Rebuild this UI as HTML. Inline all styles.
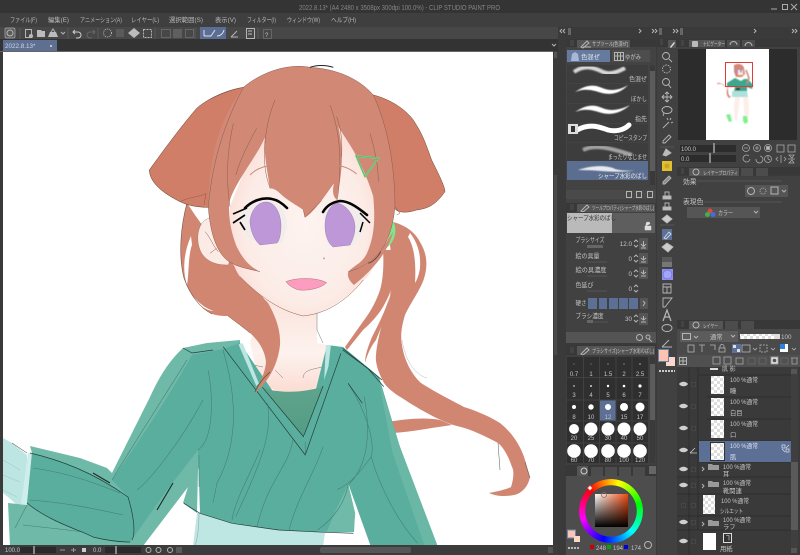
<!DOCTYPE html>
<html><head><meta charset="utf-8"><title>CLIP STUDIO PAINT PRO</title>
<style>
html,body{margin:0;padding:0;background:#3a3a3a;width:800px;height:555px;overflow:hidden}
svg{display:block;font-family:"Liberation Sans","Noto Sans CJK JP",sans-serif}
text{fill:#c4c4c4;font-size:6.3px}
.m{fill:#b8b8b8;font-size:6.5px}
.s{font-size:6px}
.e{text-anchor:end}
.c{text-anchor:middle}
.l{fill:none;stroke:#457d6f;stroke-width:.55;vector-effect:non-scaling-stroke}
.k{fill:none;stroke:#24403a;stroke-width:.7;vector-effect:non-scaling-stroke}
.h{fill:none;stroke:#8a5d4e;stroke-width:.5;vector-effect:non-scaling-stroke}
.i{fill:none;stroke:#b5b5b5;stroke-width:1}
.w{fill:#bcbcbc}
.d{fill:none;stroke:#666;stroke-width:1}
</style></head><body>
<svg width="800" height="555" viewBox="0 0 800 555" xmlns="http://www.w3.org/2000/svg">
<defs>
<radialGradient id="fc" cx=".5" cy=".55" r=".55"><stop offset="0" stop-color="#fdf3f0"/><stop offset=".7" stop-color="#fcece7"/><stop offset="1" stop-color="#fbdcd3"/></radialGradient>
<linearGradient id="nk" x1="0" y1="0" x2="0" y2="1"><stop offset="0" stop-color="#fce2da"/><stop offset=".6" stop-color="#fdf2ee"/><stop offset="1" stop-color="#fbdcd2"/></linearGradient>
<linearGradient id="sh" x1="0" y1="0" x2="0" y2="1"><stop offset="0" stop-color="#5fa48c"/><stop offset="1" stop-color="#549c85"/></linearGradient>
<linearGradient id="sq1" x1="0" y1="0" x2="1" y2="0"><stop offset="0" stop-color="#fff"/><stop offset="1" stop-color="#f04a10"/></linearGradient>
<linearGradient id="sq2" x1="0" y1="0" x2="0" y2="1"><stop offset="0" stop-color="#000" stop-opacity="0"/><stop offset="1" stop-color="#000"/></linearGradient>
<pattern id="ck" width="6" height="6" patternUnits="userSpaceOnUse"><rect width="6" height="6" fill="#fff"/><rect width="3" height="3" fill="#ddd"/><rect x="3" y="3" width="3" height="3" fill="#ddd"/></pattern>
<filter id="bl"><feGaussianBlur stdDeviation=".8"/></filter>
<filter id="bs"><feGaussianBlur stdDeviation=".4"/></filter>
</defs>

<!-- chrome -->
<rect width="800" height="555" fill="#3a3a3a"/>
<rect width="800" height="13" fill="#343434"/>
<rect y="13" width="800" height="14" fill="#3f3f3f"/>
<rect y="27" width="558" height="12" fill="#474747"/>
<rect x="558" y="27" width="242" height="12" fill="#3a3a3a"/>
<rect y="39" width="558" height="12" fill="#333"/>
<text x="299" y="10" textLength="201" lengthAdjust="spacingAndGlyphs" style="font-size:7.5px;fill:#858585">2022.8.13* (A4 2480 x 3508px 300dpi 100.0%)  - CLIP STUDIO PAINT PRO</text>
<path d="M771 9h6" stroke="#aaa" fill="none"/><rect x="782.500" y="4.500" width="5" height="5" fill="none" stroke="#aaa"/><path d="M791 4l6 6M797 4l-6 6" stroke="#aaa" fill="none"/>
<text class="m" x="10" y="22" textLength="27" lengthAdjust="spacingAndGlyphs">ファイル(F)</text>
<text class="m" x="48" y="22" textLength="21" lengthAdjust="spacingAndGlyphs">編集(E)</text>
<text class="m" x="80" y="22" textLength="42" lengthAdjust="spacingAndGlyphs">アニメーション(A)</text>
<text class="m" x="131" y="22" textLength="28" lengthAdjust="spacingAndGlyphs">レイヤー(L)</text>
<text class="m" x="169" y="22" textLength="34" lengthAdjust="spacingAndGlyphs">選択範囲(S)</text>
<text class="m" x="215" y="22" textLength="21" lengthAdjust="spacingAndGlyphs">表示(V)</text>
<text class="m" x="247" y="22" textLength="29" lengthAdjust="spacingAndGlyphs">フィルター(I)</text>
<text class="m" x="287" y="22" textLength="33" lengthAdjust="spacingAndGlyphs">ウィンドウ(W)</text>
<text class="m" x="331" y="22" textLength="25" lengthAdjust="spacingAndGlyphs">ヘルプ(H)</text>
<!-- toolbar icons -->
<rect x="5" y="28" width="10" height="10" rx="1.500" fill="#5c5c5c" stroke="#aaa" stroke-width=".7"/><circle cx="10" cy="33" r="3" class="i"/>
<path d="M20 28v11M68 28v11M98 28v11M155 28v11M195 28v11M258 28v11" stroke="#5a5a5a"/>
<rect x="25.500" y="29.500" width="6" height="8" class="i"/><circle cx="31" cy="36" r="2" fill="#bbb"/>
<path d="M37 37v-7h4l1 1h3v6z" class="w"/><path d="M48 37l2-5h6l2 5z" class="w"/><path d="M51 32l2-3 2 3" class="i"/>
<path d="M61 32l2 2 2-2" class="i" stroke-width=".7"/>
<path d="M75 30l-2 2 2 2M73 32h5a3 3 0 0 1 0 6h-2" fill="none" stroke="#ccc"/><path d="M93 30l2 2-2 2M95 32h-5a3 3 0 0 0 0 6h2" class="d"/>
<circle cx="107.500" cy="33" r="4" class="i" stroke-dasharray="1 1"/><rect x="116" y="29" width="8" height="8" fill="#5a5a5a"/>
<path d="M134 28l6 5-6 5-6-5z" class="w"/><rect x="143.500" y="29.500" width="8" height="8" class="i" stroke-dasharray="2 1"/>
<rect x="161.500" y="29.500" width="9" height="8" class="d"/><rect x="173" y="29" width="9" height="9" fill="#5f5f5f"/><rect x="185.500" y="29.500" width="8" height="8" class="d"/>
<rect x="200" y="27" width="26" height="12" fill="#5a6d92"/>
<path d="M204 36v-6M204 36h7l4-6M217 36c3 0 6-2 7-6" fill="none" stroke="#dde"/>
<path d="M231 37h7M231 37l6-6" class="i"/><rect x="246.500" y="28.500" width="8" height="10" class="i"/><path d="M248 31h4M248 34h4" stroke="#bbb"/>
<rect x="263.500" y="29.500" width="8" height="9" class="d"/><text x="265" y="37" class="s">?</text>
<path d="M552 44l2 2 2-2" class="i" stroke-width=".7"/>
<!-- tab -->
<rect x="3" y="40" width="54" height="11" fill="#5e6f92"/>
<text x="5" y="48" style="fill:#cfd6e6;font-size:6.300px">2022.8.13*</text><circle cx="51" cy="46" r="1" fill="#ddd"/>

<!-- canvas -->
<rect x="0" y="51" width="553" height="1" fill="#666"/>
<rect x="3" y="52" width="550" height="493" fill="#fff"/>

<svg x="3" y="52" width="550" height="493" viewBox="3 52 550 493" overflow="hidden">
<!-- tail -->
<path d="M393 222C405 225 415 232 420 242C426 252 428 262 425 275C422 288 412 300 405 315C402 325 400 335 402 345C404 360 412 375 421 383C440 395 455 402 464 407C480 412 492 418 500 423C515 435 522 450 525 460L530 477C528 488 520 494 514 495C505 497 495 496 489 493C500 491 510 488 511 487C514 478 514 470 512 467C508 455 503 447 498 443C485 436 472 430 461 427C445 424 420 410 402 398C392 392 388 388 384 383C378 372 375 362 376 355C377 340 384 315 390 297C392 280 392 260 390 245Z" fill="#d18672"/>
<path d="M383 250C384 265 383 280 380 290C375 305 368 315 362 323L345 347L347 350L363 330C372 322 378 315 383 307C388 298 392 290 392 283L392 250Z" fill="#d18672"/>
<path d="M390 295C386 310 378 325 372 337C368 347 365 355 365 363C368 352 372 345 376 340L384 320Z" fill="#d18672"/>
<path d="M388 422C405 419 425 417 440 420L452 425C430 428 405 433 390 433Z" fill="#d18672"/>
<path d="M410 233C418 243 421 255 420 268C419 275 417 280 415 283C416 265 415 248 408 237Z" fill="#fff"/>
<path d="M402 340C405 360 415 375 427 378" fill="none" stroke="#bbb" stroke-width=".5"/>
<path d="M498 443L500 470M525 462L530 478" fill="none" stroke="#555" stroke-width=".5"/>

<!-- neck -->
<path d="M268 295L250 342L259 383L279 392L304 392L323 385L327 345L317 343L317 312L337 295Z" fill="url(#nk)"/>
<path d="M253 365L263 367M275 370L283 378M303 378C304 372 306 370 323 367M317 312L317 330L323 343" fill="none" stroke="#777" stroke-width=".5"/>
<!-- under shirt -->
<path d="M197 513L325 533L323 546L193 546Z" fill="#bee6e3"/>
<path d="M199 513C199 530 197 540 195 546" fill="none" stroke="#999" stroke-width=".5"/>
<!-- cuff -->
<path d="M3 438L12 443L27 455L27 473L25 503L17 505L8 497L3 493Z" fill="#bde6e2"/>
<path d="M28 453L32 453L27 505L21 504Z" fill="#cdeeea"/>
<path d="M3 460L20 470M3 475L20 482M3 490L17 497" fill="none" stroke="#9cc2bd" stroke-width=".5"/>
<path d="M12 443L27 453" fill="none" stroke="#333" stroke-width=".5"/>
<!-- sweater base -->
<path d="M183 348L207 343L240 340L240 348L223 352L213 400L198 470L197 513L183 503L188 487L143 546L10 546L8 503L27 505L32 453L30 446L80 458L107 468L112 473L150 397C160 375 170 360 183 348Z" fill="#6fb9a8"/>
<path d="M32 453C60 460 93 472 128 497C135 520 135 535 130 543C120 542 105 540 93 537C80 530 50 522 27 503Z" fill="#5aae9e"/>
<path d="M192 355C170 395 140 440 112 480L128 497C135 520 135 535 133 538L167 490L198 450L213 400L223 350Z" fill="#5aae9e"/>
<path d="M198 450L213 400L208 370L192 355L223 349L240 343L304 437L327 345L343 347L371 370L379 377L388 407L400 447L438 547L371 547L348 483L355 513L354 532L325 532L279 530L232 523L200 513Z" fill="#5aae9e"/>
<g transform="translate(0,300) scale(.357,.3333)">
<path d="M1085 320L1120 440L1226 740L1190 740L1100 460L1060 235Z" fill="#6ab7a6"/>
<path d="M915 697L990 697L995 640L975 555L945 620Z" fill="#70baa9"/>
<path d="M735 262C780 282 860 278 905 258L850 410Z" fill="url(#sh)"/>
<path d="M668 133L680 130L725 250L718 258Z" fill="#bde6e2"/>
<path d="M913 135L927 135L920 200L908 240Z" fill="#bde6e2"/>
<path d="M625 140L855 465L955 160M735 262L850 410L905 258M960 145L1030 205L1075 260" class="k"/>
<path d="M855 465V425M750 310C760 400 740 470 660 650M820 420C810 500 750 540 720 680M905 440C880 520 830 600 810 690M975 250C1030 340 1050 430 1040 470C1000 530 970 560 945 568M1020 290C1040 400 1030 500 975 555M975 555C960 640 900 680 890 690M1040 470C1060 550 1110 660 1170 730" class="l"/>
<path d="M960 150L1030 205L1070 240M975 250L1015 310" class="k"/>
<path d="M515 610L560 640L650 670L780 690L910 697L990 700" class="k"/>
</g>
<!-- left lines -->
<g fill="none" stroke="#457d6f" stroke-width=".55">
<path d="M208 370C214 400 213 440 198 450M223 350C240 407 235 450 217 483L213 503M260 450C250 475 235 500 232 520M187 360C160 403 128 453 112 480M203 400C180 443 150 480 137 490M33 468C70 473 100 485 120 493M30 500C70 503 100 510 123 515M27 505L15 528M23 525C50 528 70 530 83 532M199 455V487"/>
</g>
<g fill="none" stroke="#24403a" stroke-width=".7">
<path d="M183 348L192 353L213 350M30 453C60 460 93 472 128 497C135 520 135 535 132 540M27 503C50 522 80 530 93 537C105 540 120 542 130 542"/>
<path d="M93 473L110 483M173 483L157 510" stroke-width="1.100" stroke="#1b2b27"/>
</g>

<!-- back left hair -->
<path d="M187 203C181 225 178 255 184 278C190 295 200 308 212 314C218 316 224 316 228 316C236 322 244 328 250 333C260 342 265 352 266 362C265 375 258 385 255 393C268 382 278 365 280 345C281 330 275 315 268 303L220 250L195 215Z" fill="#d18672"/>
<path d="M191 236C184 252 182 270 187 285C189 275 188 255 192 245Z" fill="#fff"/>
<path d="M187 287C193 298 203 308 214 311C205 311 195 303 187 287Z" fill="#fff"/>
<path d="M187 203C181 225 178 255 184 278C190 295 200 308 212 314" fill="none" stroke="#7c5144" stroke-width=".6"/>
<path d="M270 372C263 378 258 385 255 392" fill="none" stroke="#553" stroke-width=".8"/>
<path d="M250 333C244 328 236 322 228 316" class="h"/>

<!-- head -->
<g transform="translate(130,50) scale(.3333)">
<path d="M786 510C806 530 796 585 762 597C772 575 785 545 778 510Z" fill="#7ce88a"/>
<path d="M340 112C300 118 240 140 200 175C170 210 130 260 58 360C60 400 100 430 150 455C180 470 215 472 235 472L330 200Z" fill="#d07e68" stroke="#5a3a30" stroke-width="1.500"/>
<path d="M730 135C770 145 820 170 850 210C875 250 880 260 905 330C925 370 945 410 945 425C920 460 900 475 860 480C830 490 800 490 790 470L700 200Z" fill="#d07e68" stroke="#6a4538" stroke-width="1.500"/>
<path d="M150 455C180 440 215 440 228 430L222 465" class="h"/>
<path d="M795 470L810 490L800 495" class="h"/>
<path d="M238 505C205 510 192 570 215 610C235 640 265 645 295 645L310 600Z" fill="#fcebe5" stroke="#8a5d4e" stroke-width="1"/>
<path d="M225 545C240 560 250 590 265 605M240 610L260 595" class="h"/>
<path d="M300 470C288 560 300 640 330 680C380 730 440 780 520 798C600 790 680 720 720 670C760 600 770 450 730 300L620 200L400 220Z" fill="url(#fc)"/>
<path d="M330 680C380 730 440 780 520 798C600 790 660 740 700 690" class="h"/>
<circle cx="582" cy="625" r="3" fill="#c9a39a"/>
<path d="M468 695C500 682 560 682 590 698C570 718 520 725 500 718C485 712 475 705 468 695Z" fill="#fc9dc0" stroke="#7a4a50" stroke-width="1"/>
<path d="M390 665C350 655 310 650 285 625C250 590 238 520 235 470C235 300 280 190 340 112C400 62 480 40 540 52C640 58 700 100 730 135C770 220 795 340 795 470C785 570 750 640 655 665C680 640 700 640 715 600C735 550 735 500 730 440C715 390 695 350 680 320C665 290 640 255 625 230C640 300 640 350 620 450C612 440 605 430 612 400C590 430 550 490 525 502L520 480C500 465 470 450 450 430C440 420 430 415 420 415C410 350 400 300 405 262C380 320 320 390 300 450C292 480 300 540 320 590C340 630 360 650 390 665Z" fill="#d18875"/>
<path d="M655 665C690 655 720 645 750 605L790 545C775 600 740 650 672 705C660 695 650 680 655 665Z" fill="#d18875"/>
<path d="M340 112C300 190 250 300 235 470C238 520 250 590 285 625C310 650 350 655 390 665M730 135C770 220 795 340 795 470C785 570 750 640 655 665M240 148C300 118 330 115 340 112M340 112C400 62 480 40 540 52C640 58 700 100 730 135" class="h"/>
<path d="M310 220C295 290 285 370 300 470M380 235C350 290 330 330 318 375M435 150C410 210 395 300 408 370C412 395 420 410 420 415M600 165C625 230 640 320 622 450M720 250C735 300 745 350 745 395M620 200C630 230 638 260 635 320M520 480L525 502L575 452" class="h"/>
<path d="M540 52C560 44 590 45 610 52" fill="none" stroke="#222" stroke-width="3"/>
<path d="M715 640C730 635 745 620 752 605" fill="none" stroke="#333" stroke-width="2"/>
<path d="M360 375C385 350 415 345 440 348" fill="none" stroke="#c78d7b" stroke-width="3"/>
<path d="M605 345C635 345 660 355 680 372" fill="none" stroke="#c78d7b" stroke-width="3"/>
<path d="M678 318L745 325L705 380Z" fill="none" stroke="#6ee08a" stroke-width="5"/>
<path d="M678 318L745 325L705 380Z" fill="none" stroke="#2f7a47" stroke-width=".9"/>
</g>
<!-- eyes -->
<path d="M239 215C246 206 258 201 272 201C282 205 288 215 287 228L282 243L250 240C244 232 241 225 239 215Z" fill="#f2edeb"/>
<path d="M323 212C330 204 342 200 352 204C360 208 366 218 364 230L352 247L328 245Z" fill="#f2edeb"/>
<path d="M266 202C276 202 281 215 281 226C281 235 279 241 277 243L260 245C252 238 250 226 250 221C251 210 258 202 266 202Z" fill="#bd97d8" stroke="#8d78a4" stroke-width=".4"/>
<path d="M337 203C348 205 355 218 355 227C355 235 352 241 350 245L333 247C328 243 325 235 325 226C325 214 330 205 337 203Z" fill="#bd97d8" stroke="#8d78a4" stroke-width=".4"/>
<path d="M245 208C252 201 262 197 272 199C278 200 283 204 287 208" fill="none" stroke="#050505" stroke-width="2.600" stroke-linecap="round"/>
<path d="M233 214L247 208M233 223L245 215M245 230L240 222" fill="none" stroke="#050505" stroke-width="1.700"/>
<path d="M323 212C327 205 333 202 340 201C348 201 356 206 367 215" fill="none" stroke="#050505" stroke-width="2.600" stroke-linecap="round"/>
<path d="M360 213L370 223M360 232L363 222" fill="none" stroke="#050505" stroke-width="1.500"/>
</svg>

<!-- canvas scrollbar and status -->
<rect x="553" y="51" width="5" height="504" fill="#3b3b3b"/>
<rect x="554" y="52" width="3" height="6" fill="#555"/>
<rect x="554" y="175" width="3" height="180" fill="#4a4a4a"/>
<rect y="545" width="558" height="10" fill="#3c3c3c"/>
<rect x="320" y="547" width="91" height="6" rx="2" fill="#565656"/>
<rect x="548" y="547" width="5" height="6" fill="#555"/>
<text x="5" y="552" class="s">100.0</text><rect x="20" y="547" width="36" height="6" fill="#2a2a2a"/><rect x="33" y="546" width="2" height="8" fill="#888"/>
<path d="M60 550h5M71 550h5M73.500 548v4" stroke="#999"/><rect x="82" y="548" width="4" height="4" fill="#ccc"/>
<text x="93" y="552" class="s">0.0</text><rect x="105" y="547" width="36" height="6" fill="#2a2a2a"/><rect x="115" y="546" width="2" height="8" fill="#888"/>
<circle cx="148.500" cy="550" r="2.500" class="i" stroke-width=".6"/><circle cx="158.500" cy="550" r="2.500" class="i" stroke-width=".6"/><circle cx="170" cy="550" r="2.500" class="i" stroke-width=".6"/><rect x="176" y="547" width="6" height="6" fill="#5a5a5a"/>

<!-- dock tops -->
<path d="M562 29l-2 2 2 2M565 29l-2 2 2 2M639 29l2 2-2 2M652 29l2 2-2 2M655 29l2 2-2 2M673 29l2 2-2 2M676 29l2 2-2 2M754 29l2 2-2 2M792 29l2 2-2 2M795 29l2 2-2 2" class="i" stroke-width=".6"/>
<rect x="568" y="28" width="3" height="7" fill="#666"/><rect x="659" y="28" width="3" height="7" fill="#666"/><rect x="680" y="28" width="3" height="7" fill="#666"/>

<!-- subtool panel -->
<rect x="566" y="47" width="90" height="156" fill="#434343"/>
<rect x="566" y="39" width="90" height="8" fill="#383838"/>
<rect x="577" y="40" width="53" height="8" fill="#555"/>
<path d="M570 41h4M570 43h4M570 45h4" stroke="#666" stroke-width=".5"/>
<path d="M581 47l6-6 2 2-6 5zM583 47h8" class="i" stroke-width=".8"/>
<text x="592" y="46" textLength="36" lengthAdjust="spacingAndGlyphs" style="font-size:5.500px">サブツール[色混ぜ]</text>
<rect x="567" y="50" width="43" height="12" fill="#667aa0"/><rect x="612" y="50" width="38" height="12" fill="#4d4d4d"/>
<path d="M571 61l1-7 3-2 3 2 1 7z" fill="#a9b7d4"/>
<text x="581" y="59" style="fill:#e3e6ee">色混ぜ</text>
<rect x="614.500" y="52.500" width="9" height="8" class="i"/><path d="M617.500 52.500v8M620.500 52.500v8M614.500 56h9" class="i" stroke-width=".5"/>
<text x="625" y="59" textLength="16" lengthAdjust="spacingAndGlyphs">ゆがみ</text>
<rect x="567" y="65" width="81" height="18" fill="#3d3d3d"/><rect x="567" y="84" width="81" height="19" fill="#3d3d3d"/><rect x="567" y="104" width="81" height="19" fill="#3d3d3d"/><rect x="567" y="124" width="81" height="18" fill="#3d3d3d"/><rect x="567" y="143" width="81" height="18" fill="#3d3d3d"/><rect x="567" y="161" width="81" height="19" fill="#5c6e90"/>
<rect x="650" y="65" width="5" height="120" fill="#3a3a3a"/><rect x="650" y="71" width="5" height="100" fill="#5c5c5c"/>
<path d="M574 72C585 64 595 68 603 72C610 75 618 72 625 68" fill="none" stroke="#fff" stroke-width="4" opacity=".8" filter="url(#bl)"/>
<path d="M575 92C590 82 597 86 605 89C612 91 620 90 628 85C620 94 610 95 602 93C592 90 585 88 575 92Z" fill="#fff" filter="url(#bs)"/>
<path d="M575 112C590 102 597 106 605 109C612 111 620 110 630 105C620 114 610 115 602 113C592 110 585 108 575 112Z" fill="#fff" filter="url(#bs)"/>
<path d="M577 130C590 123 600 127 608 130C616 132 624 130 629 125" fill="none" stroke="#fff" stroke-width="5" stroke-linecap="round"/>
<rect x="568" y="124" width="10" height="10" fill="#ddd"/><rect x="571" y="126" width="4" height="6" fill="#333"/>
<path d="M583 150C595 144 610 148 632 155" fill="none" stroke="#bbb" stroke-width="4" opacity=".8" filter="url(#bl)"/>
<path d="M578 170C595 164 610 166 615 169C622 171 630 171 635 170C620 174 600 170 578 170Z" fill="#fff" opacity=".85" filter="url(#bs)"/>
<text x="629" y="81" textLength="18" lengthAdjust="spacingAndGlyphs">色混ぜ</text><text x="631" y="101" textLength="16" lengthAdjust="spacingAndGlyphs">ぼかし</text><text x="635" y="121" textLength="12" lengthAdjust="spacingAndGlyphs">指先</text><text x="614" y="140" textLength="33" lengthAdjust="spacingAndGlyphs">コピースタンプ</text><text x="608" y="159" textLength="39" lengthAdjust="spacingAndGlyphs">まったりなじませ</text><text x="598" y="178" textLength="49" lengthAdjust="spacingAndGlyphs" style="fill:#e8e8e8">シャープ水彩のばし</text>
<rect x="566" y="190" width="90" height="9" fill="#4a4a4a"/>
<rect x="626.500" y="191.500" width="5" height="6" class="i" stroke-width=".7"/><rect x="636.500" y="191.500" width="5" height="6" class="i" stroke-width=".7"/><rect x="647.500" y="191.500" width="5" height="6" class="i" stroke-width=".7"/>

<!-- tool property -->
<rect x="566" y="203" width="90" height="9" fill="#383838"/>
<rect x="577" y="204" width="78" height="8" fill="#555"/>
<path d="M570 205h4M570 207h4M570 209h4" stroke="#666" stroke-width=".5"/>
<path d="M581 211l6-6 2 2-6 5z" class="i" stroke-width=".8"/>
<text x="592" y="210" textLength="62" lengthAdjust="spacingAndGlyphs" style="font-size:5.500px">ツールプロパティ[シャープ水彩のばし]</text>
<rect x="566" y="212" width="90" height="130" fill="#414141"/>
<rect x="567" y="213" width="88" height="20" fill="#5e5e5e"/>
<rect x="567" y="213" width="45" height="20" fill="#bababa"/>
<text x="567" y="220" textLength="49" lengthAdjust="spacingAndGlyphs" style="fill:#333">シャープ水彩のばし</text>
<path d="M645 226h6v4h-6zM646 226v-2a2 2 0 0 1 4 0" fill="#ddd" stroke="#ddd" stroke-width=".5"/>
<text x="575.500" y="242" textLength="29" lengthAdjust="spacingAndGlyphs">ブラシサイズ</text><text x="575.500" y="258" textLength="24" lengthAdjust="spacingAndGlyphs">絵の具量</text><text x="575.500" y="272" textLength="31" lengthAdjust="spacingAndGlyphs">絵の具濃度</text><text x="575.500" y="287" textLength="18" lengthAdjust="spacingAndGlyphs">色延び</text><text x="575.500" y="305" textLength="11" lengthAdjust="spacingAndGlyphs">硬さ</text><text x="575.500" y="318" textLength="28" lengthAdjust="spacingAndGlyphs">ブラシ濃度</text>
<rect x="587" y="245" width="16" height="3" fill="#666"/>
<path d="M587 262h20M587 276h20M587 291h20" stroke="#555"/>
<rect x="587" y="320" width="6" height="3" fill="#666"/><path d="M593 322h15" stroke="#555"/>
<text x="632" y="246" class="e">12.0</text><text x="632" y="261" class="e">0</text><text x="632" y="276" class="e">0</text><text x="632" y="291" class="e">0</text><text x="632" y="321" class="e">30</text>
<path d="M634 242l2-2 2 2M634 245l2 2 2-2M634 257l2-2 2 2M634 260l2 2 2-2M634 272l2-2 2 2M634 275l2 2 2-2M634 287l2-2 2 2M634 290l2 2 2-2M634 317l2-2 2 2M634 320l2 2 2-2" class="i" stroke-width=".7"/>
<rect x="639" y="238" width="9" height="12" fill="#555"/><rect x="639" y="253" width="9" height="11" fill="#555"/><rect x="639" y="267" width="9" height="12" fill="#555"/><rect x="639" y="313" width="9" height="12" fill="#555"/>
<path d="M643.500 241v5M641 244l2.500 2.500 2.500-2.500M641 248h5M643.500 256v4M641 258l2.500 2 2.500-2M641 262h5M643.500 270v4M641 272l2.500 2 2.500-2M641 276h5M643.500 316v4M641 318l2.500 2 2.500-2M641 322h5" class="i" stroke-width=".6"/>
<rect x="588" y="298" width="9" height="11" fill="#5c6f95"/><rect x="599" y="298" width="8" height="11" fill="#5c6f95"/><rect x="609" y="298" width="9" height="11" fill="#5c6f95"/><rect x="619" y="298" width="9" height="11" fill="#5c6f95"/><rect x="629" y="298" width="9" height="11" fill="#5c6f95"/>
<rect x="640" y="298" width="8" height="11" fill="#555"/><path d="M643 301l2 2-2 3" class="i" stroke-width=".7"/>
<rect x="566" y="332" width="90" height="11" fill="#545454"/>
<circle cx="639.500" cy="337.500" r="3" class="i" stroke-width=".7"/><circle cx="648" cy="337" r="2" class="i" stroke-width=".7"/><path d="M649 339l3 3" class="i" stroke-width=".7"/>

<!-- brush size -->
<rect x="566" y="345" width="90" height="10" fill="#383838"/>
<rect x="577" y="346" width="78" height="9" fill="#555"/>
<path d="M570 348h4M570 350h4M570 352h4" stroke="#666" stroke-width=".5"/>
<path d="M581 354l6-6 2 2-6 5z" class="i" stroke-width=".8"/>
<text x="592" y="353" textLength="62" lengthAdjust="spacingAndGlyphs" style="font-size:5.500px">ブラシサイズ[シャープ水彩のばし]</text>
<rect x="566" y="355" width="90" height="110" fill="#3f3f3f"/>
<rect x="567" y="357" width="81" height="106" fill="#2f2f2f"/>
<path d="M583.500 357v106M599.500 357v106M616 357v106M632 357v106M567 377.500h81M567 400h81M567 421h81M567 443h81" stroke="#414141"/>
<rect x="600" y="400.500" width="15.500" height="20" fill="#5c6f95"/>
<rect x="650" y="357" width="5" height="106" fill="#3a3a3a"/><rect x="650" y="364" width="5" height="56" fill="#5c5c5c"/>
<g fill="#fff">
<circle cx="574" cy="364" r=".4"/><circle cx="591" cy="364" r=".4"/><circle cx="608" cy="364" r=".5"/><circle cx="624" cy="364" r=".5"/><circle cx="640" cy="364" r=".6"/>
<circle cx="574" cy="386" r=".7"/><circle cx="591" cy="386" r=".9"/><circle cx="608" cy="386" r="1.200"/><circle cx="624" cy="386" r="1.300"/><circle cx="640" cy="386" r="1.600"/>
<circle cx="574" cy="407" r="2"/><circle cx="591" cy="407" r="2.700"/><circle cx="608" cy="407" r="3"/><circle cx="624" cy="407" r="4"/><circle cx="640" cy="407" r="4.500"/>
<circle cx="574" cy="429" r="5"/><circle cx="591" cy="429" r="6.500"/><circle cx="608" cy="429" r="6.500"/><circle cx="624" cy="429" r="6.500"/><circle cx="640" cy="429" r="6.500"/>
<circle cx="574" cy="451" r="6.800"/><circle cx="591" cy="451" r="6.800"/><circle cx="608" cy="451" r="6.800"/><circle cx="624" cy="451" r="6.800"/><circle cx="640" cy="451" r="6.800"/>
</g>
<g>
<text x="574" y="376" class="c s">0.7</text><text x="591" y="376" class="c s">1</text><text x="608" y="376" class="c s">1.5</text><text x="624" y="376" class="c s">2</text><text x="640" y="376" class="c s">2.5</text>
<text x="574" y="397" class="c s">3</text><text x="591" y="397" class="c s">4</text><text x="608" y="397" class="c s">5</text><text x="624" y="397" class="c s">6</text><text x="640" y="397" class="c s">7</text>
<text x="574" y="419" class="c s">8</text><text x="591" y="419" class="c s">10</text><text x="608" y="419" class="c s">12</text><text x="624" y="419" class="c s">15</text><text x="640" y="419" class="c s">17</text>
<text x="574" y="440" class="c s">20</text><text x="591" y="440" class="c s">25</text><text x="608" y="440" class="c s">30</text><text x="624" y="440" class="c s">40</text><text x="640" y="440" class="c s">50</text>
<text x="574" y="462" class="c s">60</text><text x="591" y="462" class="c s">70</text><text x="608" y="462" class="c s">80</text><text x="624" y="462" class="c s">100</text><text x="640" y="462" class="c s">120</text>
</g>

<!-- color panel -->
<rect x="566" y="465" width="90" height="11" fill="#383838"/>
<rect x="577" y="466" width="11" height="10" fill="#555"/><circle cx="584" cy="471" r="3" fill="none" stroke="#ccc"/>
<rect x="591" y="467" width="12" height="9" fill="#4c4c4c"/><rect x="605" y="467" width="12" height="9" fill="#4c4c4c"/><rect x="619" y="467" width="12" height="9" fill="#4c4c4c"/><rect x="633" y="467" width="12" height="9" fill="#4c4c4c"/>
<rect x="649" y="466" width="7" height="8" fill="#666"/>
<rect x="566" y="476" width="90" height="79" fill="#4d4d4d"/>
<foreignObject x="579" y="479" width="64" height="64"><div xmlns="http://www.w3.org/1999/xhtml" style="width:64px;height:64px;border-radius:50%;background:conic-gradient(#ffbf00 0deg,#ff0 15deg,#0f0 75deg,#0ff 135deg,#00f 195deg,#f0f 255deg,#f00 315deg,#ffbf00 360deg);-webkit-mask:radial-gradient(circle,transparent 25.500px,#000 26px);mask:radial-gradient(circle,transparent 25.500px,#000 26px)"></div></foreignObject>
<rect x="595" y="494" width="33" height="33" fill="url(#sq1)"/><rect x="595" y="494" width="33" height="33" fill="url(#sq2)"/>
<circle cx="604" cy="495" r="2.500" fill="none" stroke="#777" stroke-width=".8"/>
<rect x="588" y="486" width="4" height="4" fill="#fff" stroke="#d33" transform="rotate(45 590 488)"/>
<rect x="567.500" y="530" width="8" height="8" fill="#fcc4b0" stroke="#6b86b5"/><rect x="574" y="536" width="6" height="6" fill="#fdd6ca"/>
<path d="M568 548h11" stroke="#ddd" stroke-width="1.500" stroke-dasharray="2 1"/>
<rect x="590" y="545" width="4" height="4" fill="#c00"/><rect x="607" y="545" width="4" height="4" fill="#0a0"/><rect x="624" y="545" width="4" height="4" fill="#00d"/>
<text x="596" y="550" class="s">248</text><text x="613" y="550" class="s">194</text><text x="631" y="550" class="s">174</text>
<circle cx="648" cy="545" r="3.500" class="i" stroke-width=".7"/>

<!-- tool column -->
<rect x="657" y="39" width="20" height="516" fill="#414141"/>
<rect x="657" y="39" width="20" height="8" fill="#383838"/>
<path d="M660 40h3M660 42h3M660 44h3" stroke="#666" stroke-width=".5"/>
<rect x="668" y="40" width="8" height="8" fill="#555"/><path d="M670 47l4-5 1 1-4 5z" fill="#ddd"/>
<g fill="none" stroke="#b8b8b8" stroke-width=".9">
<circle cx="666" cy="56" r="3.500"/><path d="M669 59l3 3"/>
<circle cx="666.500" cy="69" r="4" stroke-dasharray="1.500 1"/>
<circle cx="666" cy="82" r="3.500"/><path d="M668 84l3 4"/>
<path d="M667 92v10M662 97h10M665 94l2-2 2 2M665 100l2 2 2-2M664 95l-2 2 2 2M670 95l2 2-2 2"/>
<ellipse cx="667" cy="110" rx="5" ry="3.500"/><path d="M664 113l-1 3"/>
<path d="M663 128l6-6M670 120l1-2M671 123l2-1M668 120l-1-2"/>
<path d="M663 141l6-6 2 2-6 6h-2z"/>
<path d="M663 155l3-6 5 4-5 3z" fill="#bbb"/>
<path d="M663 182l6-6 2 2-6 6h-2z" fill="#888"/>
<rect x="663" y="196" width="8" height="3" fill="#bbb"/><path d="M665 196v-4h4v4"/>
<rect x="663" y="207" width="8" height="3" fill="#bbb"/><path d="M665 207v-4h4v4"/>
<path d="M667 215l5 4-5 4-5-4z" fill="#ccc"/>
</g>
<path d="M660 147h14M660 225h14" stroke="#555"/>
<rect x="662" y="161" width="10" height="10" fill="#e2bf2e"/><circle cx="667" cy="166" r="2.500" fill="#c9a520"/>
<rect x="662" y="229" width="10" height="11" fill="#5d7095"/><path d="M664 238l5-6 2 2-5 5z" fill="none" stroke="#dde" stroke-width=".9"/>
<g fill="none" stroke="#b8b8b8" stroke-width=".9">
<path d="M667 243l6 4-5 5-6-5z" fill="#ccc"/>
<path d="M663 284h8v9h-8zM663 287h8M667 287v6"/>
<path d="M663 298h9l-7 9h-2z"/>
<path d="M663 321l4-11 4 11M664.500 317h5" stroke-width="1.200"/>
<ellipse cx="667" cy="328" rx="5" ry="3.500"/>
<path d="M662 347h10M662 347l7-7"/>
</g>
<rect x="662" y="257" width="10" height="10" fill="#777"/><rect x="662" y="257" width="10" height="5" fill="#444" opacity=".6"/>
<rect x="662" y="269" width="11" height="11" fill="#8f90f0"/><circle cx="667.500" cy="274.500" r="4.500" fill="#a3a4ff" stroke="#5a5bb0" stroke-width=".5"/>
<rect x="666" y="357" width="9" height="9" fill="#fdd6ca"/>
<rect x="658.500" y="349.500" width="10" height="12" fill="#fcc4b0" stroke="#6683ad"/>
<path d="M659 371h16" stroke="#ddd" stroke-width="1.800" stroke-dasharray="2 1"/>

<!-- navigator -->
<rect x="677" y="39" width="123" height="8" fill="#383838"/>
<path d="M681 41h3M681 43h3M681 45h3" stroke="#666" stroke-width=".5"/>
<rect x="689" y="40" width="36" height="8" fill="#555"/><rect x="727" y="40" width="13" height="8" fill="#4c4c4c"/><rect x="742" y="40" width="13" height="8" fill="#4c4c4c"/>
<rect x="692" y="41" width="6" height="6" rx="1" fill="#bbb"/>
<text x="703" y="46" textLength="22" lengthAdjust="spacingAndGlyphs" style="font-size:5.500px">ナビゲーター</text>
<path d="M730 45a3 3 0 0 1 7 0M745 46a3.500 3.500 0 0 1 7 0" class="i" stroke-width=".7"/>
<rect x="677" y="47" width="123" height="120" fill="#414141"/>
<rect x="678" y="49" width="119" height="91" fill="#2c2c2c"/>
<rect x="706" y="49" width="63" height="91" fill="#fff"/>
<!-- thumbnail figure -->
<g filter="url(#bs)">
<path d="M734 65c4-2 9-1 10 3l1 6-3 3-6 0-2-5z" fill="#d18875"/>
<path d="M738 70h5v5h-5z" fill="#fce7e1"/>
<ellipse cx="736" cy="71" rx="1" ry="1.500" fill="#a08ce0"/><ellipse cx="741" cy="71" rx="1" ry="1.500" fill="#a08ce0"/>
<path d="M735 78l-8 5v4h8l-1 4h13l0-4 5 2 1-4-5-6-4 0-3 2z" fill="#3ea78e"/>
<path d="M732 91h15l1 6h-16z" fill="#aee0dc"/>
<path d="M736 88h4v2h-4z" fill="#333"/>
<path d="M735 97h5l-1 10 -2 13h-2l-1-13zM743 97h5l1 10-1 14h-3l-1-12z" fill="#fdeee9"/>
<path d="M726 115l3 7 3-1-2-7zM743 116l4 0 1 6-3 2-2-3z" fill="#7ef08c"/>
<path d="M728 87c-3 0-5-2-7-3-2-1-3 1-4 0 0 0 1-2 3-1 3 1 6 4 8 5 0 5 0 7 3 9l-2 1c-3-3-3-7-1-11z" fill="#d18672"/>
<path d="M746 70l3 8-2 6" fill="none" stroke="#d18672" stroke-width="1.500"/>
</g>
<rect x="725.500" y="62.500" width="27" height="24" fill="none" stroke="#e63a3a" stroke-width="1"/>
<!-- nav controls -->
<rect x="680" y="145" width="56" height="7" fill="#2c2c2c"/><text x="681" y="151" class="s">100.0</text><rect x="713" y="143" width="2" height="10" fill="#888"/>
<rect x="680" y="155" width="56" height="7" fill="#2c2c2c"/><text x="681" y="161" class="s">0.0</text><rect x="709" y="153" width="2" height="10" fill="#888"/>
<g fill="none" stroke="#a9a9a9" stroke-width=".8">
<circle cx="746" cy="148" r="3.500"/><circle cx="757" cy="148" r="3.500"/><circle cx="768" cy="148" r="3.500"/>
<path d="M744 148h4M755 148h4M757 146v4"/><rect x="766.500" y="146.500" width="3" height="3" fill="#bbb"/>
<rect x="777" y="145" width="7" height="7"/><rect x="788" y="145" width="7" height="7"/>
<path d="M749 156a3.500 3.500 0 1 0 1 3M756 159a3.500 3.500 0 1 0 4-3M768 155.500v3.500l2 1"/><circle cx="768" cy="159" r="3.500"/>
<path d="M781 155v8M778 157l-2 2 2 2M784 157l2 2-2 2M788 159h7M789 155h5l-2 3zM789 163h5l-2-3z"/>
</g>

<!-- layer property -->
<rect x="677" y="167" width="123" height="8" fill="#383838"/>
<path d="M681 169h3M681 171h3M681 173h3" stroke="#666" stroke-width=".5"/>
<rect x="689" y="168" width="50" height="8" fill="#555"/><rect x="741" y="168" width="12" height="8" fill="#4c4c4c"/><rect x="756" y="168" width="12" height="8" fill="#4c4c4c"/>
<circle cx="696" cy="172" r="3" class="i"/>
<text x="703" y="175" textLength="35" lengthAdjust="spacingAndGlyphs" style="font-size:5.500px">レイヤープロパティ</text>
<rect x="677" y="176" width="123" height="144" fill="#414141"/>
<text x="683" y="184" style="font-size:6.800px">効果</text><path d="M697 181h85" stroke="#555"/>
<rect x="745" y="185" width="43" height="12" fill="#555"/>
<circle cx="751" cy="191" r="3.500" class="i" stroke-width=".8"/><circle cx="763" cy="191" r="3" fill="none" stroke="#aaa" stroke-width="1" stroke-dasharray="1 1"/><rect x="771" y="187" width="7" height="7" class="i" stroke-width=".8"/><path d="M782 190l2 2 2-2" class="i" stroke-width=".7"/>
<text x="683" y="204" style="font-size:6.800px">表現色</text><path d="M704 202h78" stroke="#555"/>
<rect x="687" y="207" width="73" height="11" fill="#555"/>
<circle cx="710" cy="211" r="2.500" fill="#e0483a"/><circle cx="707.500" cy="214.500" r="2.500" fill="#3fb04c"/><circle cx="713" cy="214.500" r="2.500" fill="#3d6fe0"/>
<text x="718" y="215" textLength="15" lengthAdjust="spacingAndGlyphs">カラー</text><path d="M754 211l2 2 2-2" class="i" stroke-width=".7"/>

<!-- layer panel -->
<rect x="677" y="320" width="123" height="9" fill="#383838"/>
<path d="M681 322h3M681 324h3M681 326h3" stroke="#666" stroke-width=".5"/>
<rect x="689" y="321" width="34" height="8" fill="#555"/><rect x="725" y="321" width="13" height="8" fill="#4c4c4c"/><rect x="741" y="321" width="13" height="8" fill="#4c4c4c"/>
<circle cx="696" cy="325" r="3" class="i"/><text x="703" y="328" textLength="15" lengthAdjust="spacingAndGlyphs" style="font-size:5.500px">レイヤー</text>
<rect x="677" y="329" width="123" height="26" fill="#4a4a4a"/>
<rect x="680" y="331" width="21" height="11" fill="#5c5c5c"/><rect x="682.500" y="333.500" width="8" height="6" class="i" stroke-width=".8"/><path d="M694 336l2 2 2-2" class="i" stroke-width=".7"/>
<rect x="701" y="331" width="37" height="11" fill="#5c5c5c"/><text x="710" y="339">通常</text><path d="M731 335l2 2 2-2" class="i" stroke-width=".7"/>
<rect x="740" y="334" width="40" height="5" fill="url(#ck)"/><rect x="774" y="334" width="6" height="5" fill="#ddd"/>
<text x="781" y="339">100</text>
<g fill="none" stroke="#b5b5b5" stroke-width=".8">
<rect x="688" y="345" width="6" height="7"/><path d="M699 345h6M702 345v7M710 345h5v5M719 348h6v4h-6zM720 348v-1.500a2 2 0 0 1 4 0V348"/>
<rect x="742" y="345" width="8" height="7"/><path d="M753 348l2 2 2-2"/><rect x="760" y="345" width="7" height="7" stroke-dasharray="2 1"/><path d="M771 348l2 2 2-2"/>
<path d="M792 348l2 2 2-2"/>
</g>
<rect x="732" y="344" width="9" height="9" fill="#5d7095"/><path d="M733 345h3v3h-3zM737 349h3v3h-3z" fill="#dde"/>
<rect x="780" y="344" width="8" height="8" fill="#fff"/><rect x="780" y="344" width="5" height="5" fill="#2a7fe8"/>
<rect x="677" y="355" width="123" height="12" fill="#505050"/>
<rect x="679.500" y="357.500" width="7" height="7" class="i" stroke-width=".7"/><path d="M683 357.500v7M679.500 361h7" class="i" stroke-width=".5"/>
<g fill="none" stroke="#a5a5a5" stroke-width=".8">
<rect x="713" y="357" width="7" height="7"/><rect x="724" y="357" width="7" height="7"/><rect x="736" y="358" width="7" height="6"/>
<rect x="748" y="358" width="7" height="6" stroke="#6a6a6a"/><rect x="759" y="358" width="7" height="6" stroke="#6a6a6a"/>
<rect x="771" y="357" width="7" height="7" fill="#ddd"/><rect x="781" y="358" width="7" height="6" stroke="#6a6a6a"/><path d="M792 358h5v6h-5zM791 358h7"/>
</g>
<circle cx="774.500" cy="360.500" r="1.800" fill="#555"/>
<rect x="677" y="367" width="123" height="188" fill="#3a3a3a"/>
<path d="M689 367v188M698 367v163" stroke="#2d2d2d"/>
<rect x="791" y="367" width="7" height="183" fill="#3f3f3f"/><rect x="791" y="462" width="7" height="68" fill="#5a5a5a"/><rect x="791" y="369" width="6" height="5" fill="#555"/><rect x="791" y="548" width="6" height="5" fill="#555"/>
<!-- layers rows -->
<text x="722" y="371" class="s">肌 影</text><path d="M710 369h8" stroke="#ddd" stroke-width="2"/>
<path d="M699 375h92M707 397h84M707 419h84M699 441h92M699 462h92M677 477h114M677 494h114M677 516h114M677 530h114" stroke="#2c2c2c" stroke-width=".7"/>
<rect x="711" y="376" width="13" height="18" fill="url(#ck)"/>
<rect x="711" y="398" width="13" height="18" fill="url(#ck)"/>
<rect x="711" y="420" width="13" height="18" fill="url(#ck)"/>
<rect x="699" y="441" width="92" height="21" fill="#5c6f95"/>
<rect x="710.500" y="442.500" width="14" height="18" fill="url(#ck)" stroke="#333"/>
<text x="730" y="382" textLength="28" lengthAdjust="spacingAndGlyphs">100 %通常</text><text x="730" y="393">瞳</text>
<text x="730" y="404" textLength="28" lengthAdjust="spacingAndGlyphs">100 %通常</text><text x="730" y="415">白目</text>
<text x="730" y="426" textLength="28" lengthAdjust="spacingAndGlyphs">100 %通常</text><text x="730" y="437">口</text>
<text x="730" y="448" textLength="28" lengthAdjust="spacingAndGlyphs" style="fill:#d9dfee">100 %通常</text><text x="730" y="459" style="fill:#d9dfee">肌</text>
<path d="M782 445h3v3h-3zM786 449h3v3h-3zM782 449l3 3M789 445l-3 3" stroke="#dde" fill="none" stroke-width=".7"/>
<text x="723" y="469" textLength="28" lengthAdjust="spacingAndGlyphs">100 %通常</text><text x="723" y="476">耳</text>
<text x="723" y="485" textLength="28" lengthAdjust="spacingAndGlyphs">100 %通常</text><text x="723" y="493">靴関連</text>
<text x="721" y="503" textLength="28" lengthAdjust="spacingAndGlyphs">100 %通常</text><text x="720" y="513" textLength="23" lengthAdjust="spacingAndGlyphs">シルエット</text>
<text x="723" y="522" textLength="28" lengthAdjust="spacingAndGlyphs">100 %通常</text><text x="723" y="529">ラフ</text>
<text x="720" y="551">用紙</text>
<rect x="703" y="495" width="12" height="19" fill="url(#ck)"/>
<rect x="703" y="533" width="13" height="17" fill="#fff"/>
<rect x="723.500" y="533.500" width="8" height="9" fill="#333" stroke="#ddd"/><path d="M726 535.500h3v5" fill="none" stroke="#ddd" stroke-width=".6"/>
<g fill="#9a9a9a">
<path d="M708 470v-6h4l1 1h6v5zM708 487v-6h4l1 1h6v5zM708 526v-6h4l1 1h6v5z"/>
</g>
<path d="M702 467l2 2-2 2M702 484l2 2-2 2M702 522l2 2-2 2" class="i" stroke-width=".8"/>
<g fill="#cfcfcf">
<path d="M679 384c2-3 7-3 9 0c-2 3-7 3-9 0z"/>
<path d="M679 406c2-3 7-3 9 0c-2 3-7 3-9 0zM679 428c2-3 7-3 9 0c-2 3-7 3-9 0zM679 450c2-3 7-3 9 0c-2 3-7 3-9 0zM679 469c2-3 7-3 9 0c-2 3-7 3-9 0zM679 485c2-3 7-3 9 0c-2 3-7 3-9 0zM679 522c2-3 7-3 9 0c-2 3-7 3-9 0zM679 541c2-3 7-3 9 0c-2 3-7 3-9 0z"/>
</g>
<g fill="none" stroke="#4f4f4f" stroke-width=".6">
<rect x="691.500" y="382.500" width="4" height="4"/><rect x="691.500" y="404.500" width="4" height="4"/><rect x="691.500" y="426.500" width="4" height="4"/><rect x="691.500" y="467.500" width="4" height="4"/><rect x="691.500" y="483.500" width="4" height="4"/><rect x="691.500" y="503.500" width="4" height="4"/><rect x="691.500" y="520.500" width="4" height="4"/><rect x="691.500" y="539.500" width="4" height="4"/><rect x="681.500" y="503.500" width="4" height="4"/>
</g>
<path d="M690 453h7M690 453l5-5" fill="none" stroke="#ccc" stroke-width=".8"/>
</svg>
</body></html>
